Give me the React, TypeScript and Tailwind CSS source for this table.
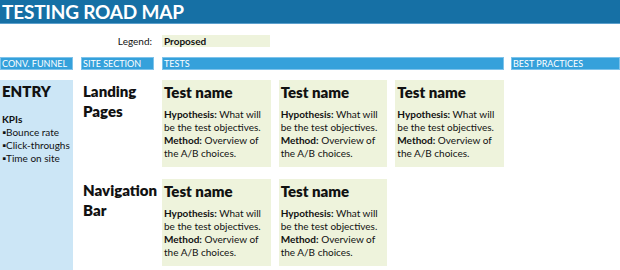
import React from "react";

const font = { fontFamily: "Lato, 'Open Sans', sans-serif" };

function Card() {
  return (
    <div className="bg-[#eef3dc] h-[87px] pl-[2px] pt-[3px] text-[#111]">
      <div className="text-[15px] font-extrabold leading-[18px]">Test name</div>
      <div className="mt-[7px] text-[10px] leading-[13px] whitespace-nowrap">
        <div><b className="font-bold">Hypothesis:</b> What will</div>
        <div>be the test objectives.</div>
        <div><b className="font-bold">Method:</b> Overview of</div>
        <div>the A/B choices.</div>
      </div>
    </div>
  );
}

const head = "bg-[#35a1db] border border-[#7ec3eb] pl-[1px] whitespace-nowrap overflow-hidden";

export default function App() {
  return (
    <div className="w-[620px] h-[270px] bg-white overflow-hidden text-[#111]" style={font}>
      <div className="h-[24px] bg-[#1670a5] border-b border-[#5b9fcc] pl-[2px] flex items-center">
        <span className="text-white font-bold text-[19px] leading-none tracking-[-0.2px]">TESTING ROAD MAP</span>
      </div>
      <div className="flex items-center h-[12px] mt-[11px]">
        <div className="w-[152px] text-right text-[10px] leading-[12px]">Legend:</div>
        <div className="ml-[10px] w-[108px] h-[12px] bg-[#eef3dc] text-[10px] font-bold leading-[12px] pl-[2px]">Proposed</div>
      </div>
      <div className="flex mt-[10px] h-[13px] text-white text-[9px] leading-[11px]">
        <div className={`w-[73px] ${head}`}>CONV. FUNNEL</div>
        <div className={`ml-[8px] w-[73px] ${head}`}>SITE SECTION</div>
        <div className={`ml-[8px] w-[342px] ${head}`}>TESTS</div>
        <div className={`ml-[7px] w-[109px] ${head}`}>BEST PRACTICES</div>
      </div>
      <div className="flex mt-[10px]">
        <div className="w-[73px] h-[190px] bg-[#cce6f6] pl-[2px] pt-[2px]">
          <div className="text-[15px] font-extrabold leading-[18px]">ENTRY</div>
          <div className="mt-[13px] text-[10px] leading-[13px]">
            <div className="font-bold">KPIs</div>
            <div>▪Bounce rate</div>
            <div>▪Click-throughs</div>
            <div>▪Time on site</div>
          </div>
        </div>
        <div className="ml-[8px] flex flex-col gap-[12px]">
          <div className="flex">
            <div className="w-[73px] pl-[2px] pt-[1px] text-[15px] font-extrabold leading-[20px]">
              <div>Landing</div>
              <div>Pages</div>
            </div>
            <div className="ml-[8px] w-[342px] grid grid-cols-3 gap-[8px]">
              <Card />
              <Card />
              <Card />
            </div>
          </div>
          <div className="flex">
            <div className="w-[73px] pl-[2px] pt-[1px] text-[15px] font-extrabold leading-[20px]">
              <div>Navigation</div>
              <div>Bar</div>
            </div>
            <div className="ml-[8px] w-[342px] grid grid-cols-3 gap-[8px]">
              <Card />
              <Card />
            </div>
          </div>
        </div>
      </div>
    </div>
  );
}
